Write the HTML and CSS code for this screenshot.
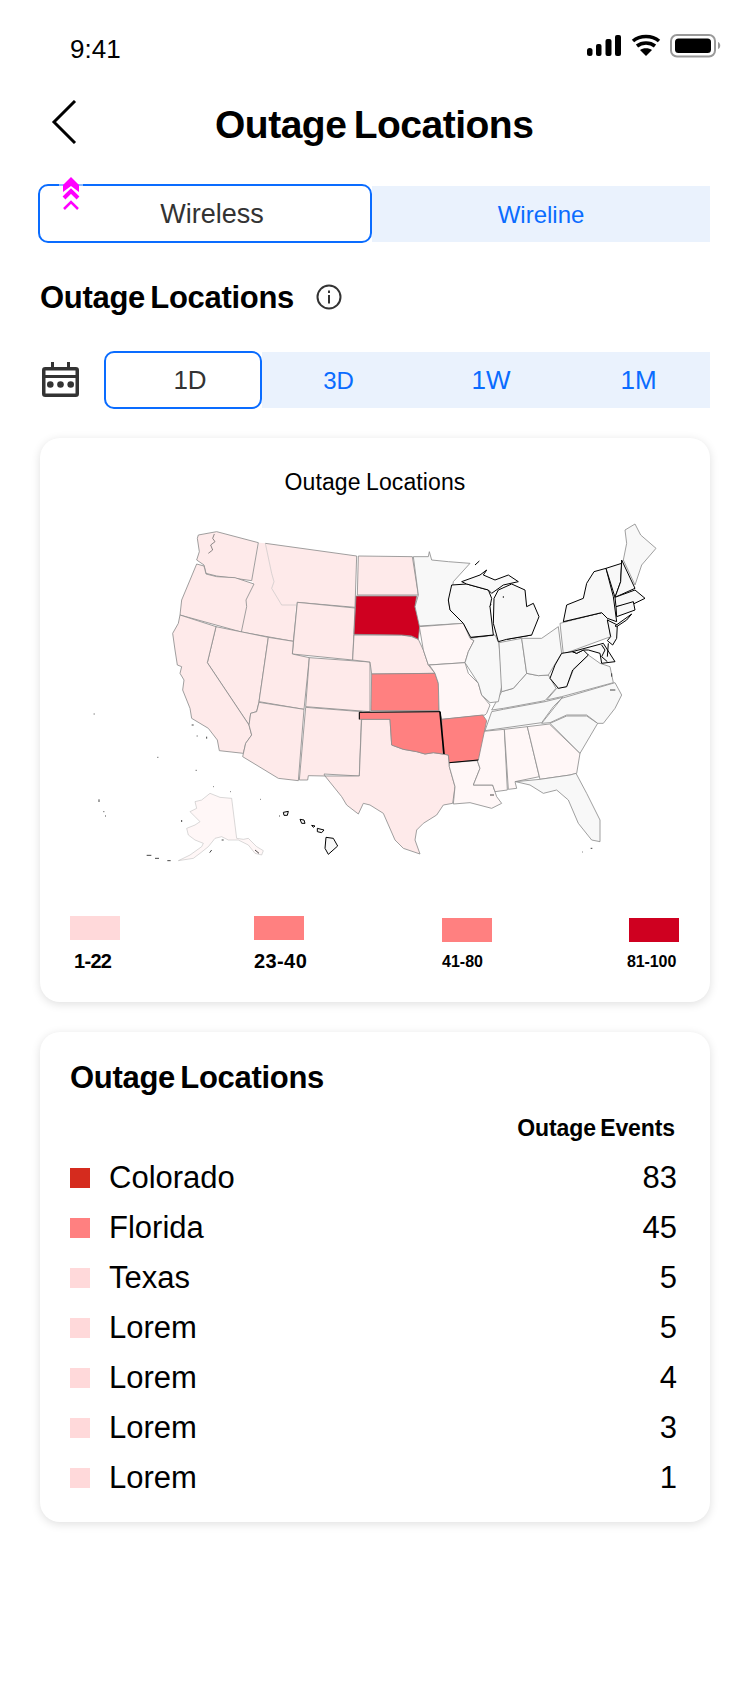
FILE: index.html
```html
<!DOCTYPE html>
<html lang="en">
<head>
    <meta charset="UTF-8">
    <title>Outage Locations</title>
    <link rel="stylesheet" href="styles.css">
</head>
<body>
    <div class="estado">
        <span class="hora">9:41</span>
        <svg class="iconos_estado" width="135" height="24" viewBox="0 0 135 24">
            <rect x="0" y="14" width="5.5" height="8" rx="2.5" fill="#000"/>
            <rect x="9" y="10" width="5.5" height="12" rx="2" fill="#000"/>
            <rect x="18.5" y="5" width="6" height="17" rx="2" fill="#000"/>
            <rect x="28" y="1" width="6" height="21" rx="2" fill="#000"/>
            <path d="M46 7 C53 1 65 1 72 7 M50 12 C55 8 63 8 68 12" fill="none" stroke="#000" stroke-width="3.6"/>
            <path d="M53 16 C56 13.500 62 13.500 65 16 L59 22 Z" fill="#000"/>
            <rect x="84" y="1" width="44" height="21.500" rx="6" fill="#fff" stroke="#999" stroke-width="2"/>
            <rect x="88" y="4.500" width="36" height="14.500" rx="3.500" fill="#000"/>
            <path d="M131 8 C134 9 134 14 131 15 Z" fill="#999"/>
        </svg>
    </div>

    <header class="cabecera">
        <svg class="volver" width="26" height="44" viewBox="0 0 26 44">
            <path d="M24 1 L3 22 L24 43" fill="none" stroke="#000" stroke-width="3"/>
        </svg>
        <h1>Outage Locations</h1>
    </header>

    <div class="pestanas">
        <div class="pestana activa">Wireless</div>
        <div class="pestana">Wireline</div>
        <svg class="flechas" width="24" height="34" viewBox="0 0 24 34">
            <rect x="0" y="7" width="24" height="2" fill="#8ab8fb"/>
            <path d="M12 0 L4 8 V15 L12 9 L20 15 V8 Z" fill="#f0f"/>
            <path d="M5 21 L12 14 L19 21" fill="none" stroke="#f0f" stroke-width="4"/>
            <path d="M5 32 L12 25 L19 32" fill="none" stroke="#f0f" stroke-width="2.500"/>
        </svg>
    </div>

    <div class="seccion">
        <h2>Outage Locations</h2>
        <svg class="info" width="26" height="26" viewBox="0 0 26 26">
            <circle cx="13" cy="13" r="11.500" fill="none" stroke="#333" stroke-width="2"/>
            <rect x="12" y="11" width="2" height="8.500" fill="#333"/>
            <rect x="12" y="6.500" width="2" height="2.500" fill="#333"/>
        </svg>
    </div>

    <div class="periodo">
        <svg class="calendario" width="37" height="35" viewBox="0 0 37 35">
            <rect x="9" y="0" width="3" height="7" fill="#333"/>
            <rect x="25" y="0" width="3" height="7" fill="#333"/>
            <rect x="1.750" y="6.750" width="33.500" height="26.500" rx="1.500" fill="#fff" stroke="#333" stroke-width="3.500"/>
            <rect x="1.500" y="13" width="34" height="3" fill="#333"/>
            <circle cx="8.300" cy="22.500" r="3.300" fill="#333"/>
            <circle cx="18.500" cy="22.500" r="3.300" fill="#333"/>
            <circle cx="28.700" cy="22.500" r="3.300" fill="#333"/>
        </svg>
        <div class="rango activo">1D</div>
        <div class="rango r3d">3D</div>
        <div class="rango r1w">1W</div>
        <div class="rango r1m">1M</div>
    </div>

    <section class="tarjeta mapa_tarjeta">
        <div class="mapa_titulo">Outage Locations</div>
        <!-- coordenadas x3: oeste tal cual, este desplazado 870 -->
        <svg class="mapa" width="590" height="370" viewBox="0 0 1770 1110">
            <g class="gris">
                <path class="rosa sin_borde" d="M537 98 L556 100 L575 190 L582 215 L575 235 L605 285 L648 285 L640 394 L484 366 L500 290 L498 270 L522 222 L515 212 Z"/>
                <path class="rosa sin_borde" d="M556 100 L830 138 L825 292 L652 277 L648 285 L605 285 L575 235 L582 215 L575 190 Z"/>
                <path class="fino" d="M556 100 L575 190 L582 215 L575 235 L605 285 L648 285"/>
                <path class="rosa" d="M355 75 L410 65 L535 98 L515 212 L465 205 L410 198 L378 190 L372 165 L350 150 L358 125 L352 85 Z"/>
                <path class="rosa" d="M350 162 L372 168 L378 192 L410 200 L465 203 L522 222 L498 270 L500 290 L484 366 L300 315 L305 270 L330 210 Z"/>
                <path fill="none" d="M556 100 L830 138 L825 292 L652 277 L640 394 L484 366"/>
                <path class="rosa" d="M652 277 L825 294 L818 450 L637 432 Z"/>
                <path class="rosa" d="M408 350 L565 382 L537 575 L530 605 L512 610 L507 645 L382 458 Z"/>
                <path class="rosa" d="M300 315 L408 350 L382 458 L507 645 L515 675 L497 700 L490 730 L418 722 L412 690 L385 655 L335 625 L330 595 L308 540 L312 510 L300 490 L305 470 L292 465 L285 420 L278 370 L295 340 Z"/>
                <path class="rosa" d="M565 382 L640 394 L637 432 L688 443 L672 598 L537 575 Z"/>
                <path class="rosa" d="M688 443 L870 456 L870 605 L677 590 Z"/>
                <path class="rosa" d="M537 577 L672 598 L655 812 L595 805 L488 740 L497 700 L515 675 L507 645 L512 610 L530 605 Z"/>
                <path class="rosa" d="M677 592 L845 605 L838 798 L732 792 L735 798 L685 797 L683 810 L658 810 Z"/>
                <path class="claro fino" d="M390 850 L420 862 L455 865 L470 985 L490 988 L505 985 L530 1010 L550 1022 L545 1035 L525 1030 L505 1005 L475 990 L445 990 L425 980 L405 985 L385 1010 L360 1030 L340 1045 L295 1052 L330 1035 L365 1010 L370 1000 L345 990 L325 975 L320 955 L345 945 L360 935 L345 920 L330 905 L350 895 L345 875 L365 870 Z"/>
            </g>
            <g class="negro">
                <path class="delgado" d="M403 72 L398 85 L405 95 L392 105 L398 120 L385 130"/>
                <path class="blanco" d="M738 982 L760 985 L773 1008 L745 1033 L735 1015 Z"/>
                <path class="blanco" d="M610 907 L625 904 L622 916 L612 916 Z"/>
                <path class="blanco" d="M660 928 L672 930 L675 940 L665 940 Z"/>
                <path class="blanco" d="M695 946 L705 948 L700 952 Z M712 955 L732 960 L725 968 L712 965 Z"/>
            </g>
            <path class="puntos" d="M41 612 h3 M232 742 h3 M347 781 h3 M400 830 h2 M450 845 h2 M541 868 h2 M597 918 h3 M57 868 v8 M70 905 h3 M75 918 h3 M335 645 h6 M350 678 h3 M380 680 v6 M200 1036 h14 M225 1045 h12 M262 1052 h10 M305 930 v6 M425 990 h6 M395 1020 l-6 8 M525 1020 l12 10"/>

            <g transform="translate(870 0)">
                <g class="gris">
                    <path class="rosa" d="M-35 138 L127 140 L145 255 L-38 255 Z"/>
                    <path class="rosa" d="M-48 375 L95 375 L125 380 L145 388 L160 420 L175 465 L195 490 L5 492 L0 456 L-52 450 Z"/>
                    <path class="rosa" d="M-25 628 L60 628 L65 705 L100 718 L140 725 L165 732 L190 728 L235 735 L238 770 L255 830 L248 880 L220 885 L200 915 L160 940 L140 960 L135 990 L150 1032 L100 1015 L75 990 L40 910 L0 885 L-20 880 L-35 912 L-70 885 L-85 860 L-135 798 L-32 798 Z"/>
                    <path class="medio" d="M5 492 L195 490 L205 520 L207 602 L3 602 Z"/>
                    <path class="fuerte" d="M-42 258 L140 258 L135 290 L150 340 L145 388 L125 378 L95 375 L-48 373 Z"/>
                    <path class="blanco" d="M130 140 L175 140 L178 125 L185 150 L235 155 L300 160 L250 215 L245 250 L235 270 L240 300 L280 340 L148 348 L135 290 L145 255 Z"/>
                    <path class="claro" d="M148 350 L280 340 L300 385 L312 392 L295 425 L285 458 L175 465 L160 420 Z"/>
                    <path class="claro" d="M178 465 L285 458 L295 490 L325 520 L335 555 L360 585 L350 610 L345 615 L215 628 L207 600 L205 520 L195 490 Z"/>
                    <path class="claro" d="M238 758 L322 752 L330 775 L310 825 L368 825 L380 860 L395 880 L365 895 L300 878 L250 882 L255 830 L238 770 Z"/>
                    <path class="claro" d="M330 665 L403 658 L412 840 L375 845 L368 825 L310 825 L330 775 L322 752 Z"/>
                    <path class="claro" d="M403 658 L472 650 L508 800 L435 815 L440 835 L415 838 Z"/>
                    <path class="claro" d="M472 650 L538 642 L630 730 L620 790 L600 795 L510 808 Z"/>
                    <path class="blanco" d="M437 815 L510 808 L600 795 L618 790 L650 850 L690 930 L690 995 L665 990 L625 940 L595 870 L560 840 L520 850 L480 825 Z"/>
                    <path class="blanco" d="M540 640 L590 618 L650 618 L683 640 L630 730 Z"/>
                    <path class="blanco" d="M515 640 L575 565 L735 518 L755 555 L735 595 L700 640 L683 640 L650 615 L590 615 L540 638 Z"/>
                    <path class="blanco" d="M345 662 L365 605 L400 598 L525 575 L578 562 L550 590 L515 638 Z"/>
                    <path class="blanco" d="M365 600 L395 545 L430 535 L470 490 L505 497 L535 495 L558 535 L525 572 L400 595 Z"/>
                    <path class="blanco" d="M300 385 L375 375 L387 400 L397 520 L385 575 L360 578 L335 555 L325 520 L285 458 L295 425 L312 392 Z"/>
                    <path class="blanco" d="M387 398 L455 385 L470 490 L430 535 L395 545 Z"/>
                    <path class="blanco" d="M455 385 L515 385 L565 350 L575 430 L535 495 L505 497 L470 490 Z"/>
                    <path class="blanco" d="M530 570 L560 535 L590 530 L610 480 L655 435 L690 460 L720 470 L730 518 L575 560 Z"/>
                    <path class="blanco" d="M765 60 L795 42 L812 75 L858 115 L815 165 L795 225 L760 150 L770 100 Z"/>
                    <path class="medio" d="M-32 607 L210 605 L217 680 L220 732 L190 728 L165 732 L140 725 L100 718 L65 705 L60 628 L-32 628 Z"/>
                    <path class="medio" d="M215 628 L338 615 L350 632 L325 750 L238 758 L235 735 L220 732 Z"/>
                    <path class="blanco" d="M570 340 L695 308 L712 325 L722 380 L580 432 Z"/>
                </g>
                <g class="negro">
                    <path d="M-32 628 L-32 607 L210 605"/>
                    <path class="grueso" d="M210 605 L217 680 L222 732"/>
                    <path d="M238 758 L325 750"/>
                    <path d="M302 382 L370 375 M410 388 L485 375"/>
                    <path d="M580 335 L695 308"/>
                    <path class="blanco" d="M245 225 L290 222 L355 240 L365 265 L360 290 L370 375 L302 382 L280 340 L240 300 L235 270 Z"/>
                    <path class="blanco" d="M372 265 L385 240 L425 222 L465 240 L470 290 L490 280 L507 320 L485 375 L410 388 L385 395 L370 340 Z"/>
                    <path class="blanco" d="M275 215 L330 195 L350 180 L340 195 L375 210 L415 195 L445 215 L400 225 L365 250 L355 240 L290 222 Z"/>
                    <path class="blanco" d="M580 335 L590 285 L640 265 L650 220 L672 185 L708 175 L730 260 L740 335 L712 325 L695 308 Z"/>
                    <path class="blanco" d="M575 430 L607 425 L620 430 L640 420 L655 435 L608 480 L590 530 L565 535 L540 505 L555 465 Z"/>
                    <path class="blanco" d="M607 425 L700 400 L735 455 L695 460 L690 430 L655 420 L640 420 L620 430 Z"/>
                    <path class="blanco" d="M712 330 L742 345 L740 385 L728 405 L712 392 L722 380 Z"/>
                    <path class="blanco" d="M708 175 L755 160 L752 215 L735 262 Z"/>
                    <path class="blanco" d="M755 150 L795 235 L735 262 L752 215 Z"/>
                    <path class="blanco" d="M735 262 L795 240 L825 265 L790 282 L738 290 Z"/>
                    <path class="blanco" d="M738 290 L790 275 L795 300 L740 320 Z"/>
                    <path class="blanco" d="M735 348 L785 312 L770 330 L740 350 Z"/>
                    <path d="M315 165 L328 153"/>
                    <path d="M695 405 L705 420 L695 440 L712 455 M715 400 L712 440"/>
                </g>
                <path class="puntos" d="M400 258 v6 M358 290 l6 -6 M662 1015 h5 M636 1026 h2 M360 855 h12 M725 490 v10 M720 540 h16"/>
            </g>
        </svg>
        <div class="leyenda">
            <div class="dato">
                <div class="muestra m_suave"></div>
                <div class="dato_texto t1">1-22</div>
            </div>
            <div class="dato">
                <div class="muestra m_medio"></div>
                <div class="dato_texto t2">23-40</div>
            </div>
            <div class="dato bajo">
                <div class="muestra m_medio"></div>
                <div class="dato_texto t3">41-80</div>
            </div>
            <div class="dato bajo">
                <div class="muestra m_fuerte"></div>
                <div class="dato_texto t4">81-100</div>
            </div>
        </div>
    </section>

    <section class="tarjeta lista_tarjeta">
        <h2>Outage Locations</h2>
        <div class="lista_cabecera">Outage Events</div>
        <div class="fila"><span class="cuadro c_rojo"></span><span class="nombre">Colorado</span><span class="numero">83</span></div>
        <div class="fila"><span class="cuadro c_medio"></span><span class="nombre">Florida</span><span class="numero">45</span></div>
        <div class="fila"><span class="cuadro c_suave"></span><span class="nombre">Texas</span><span class="numero">5</span></div>
        <div class="fila"><span class="cuadro c_suave"></span><span class="nombre">Lorem</span><span class="numero">5</span></div>
        <div class="fila"><span class="cuadro c_suave"></span><span class="nombre">Lorem</span><span class="numero">4</span></div>
        <div class="fila"><span class="cuadro c_suave"></span><span class="nombre">Lorem</span><span class="numero">3</span></div>
        <div class="fila"><span class="cuadro c_suave"></span><span class="nombre">Lorem</span><span class="numero">1</span></div>
    </section>
</body>
</html>
```

FILE: styles.css
```css
body{
    margin:0;
    min-height:1696px;
    background:#fff;
    color:#000;
    font-family:"Liberation Sans",Arial,sans-serif;
}
h1,h2{
    margin:0;
    font-weight:700;
}

/* barra de estado */
.estado{
    display:flex;
    justify-content:space-between;
    padding:34px 28px 0 70px;
    height:30px;
}
.hora{
    font-size:26px;
    line-height:30px;
}

/* cabecera */
.cabecera{
    display:flex;
    align-items:center;
    height:52px;
    margin-top:34px;
    padding-left:51px;
}
.volver{
    margin-top:-4px;
}
.cabecera h1{
    margin:2px 0 0 138px;
    font-size:39px;
    letter-spacing:-0.5px;
    word-spacing:-3px;
}

/* pestañas */
.pestanas{
    position:relative;
    display:flex;
    align-items:center;
    margin:34px 40px 0 38px;
}
.pestana{
    flex:1;
    height:56px;
    line-height:57px;
    text-align:center;
    font-size:24px;
    color:#0a6cff;
    background:#eaf2fd;
}
.pestana.activa{
    flex:none;
    box-sizing:border-box;
    width:334px;
    height:59px;
    line-height:57px;
    padding-left:14px;
    font-size:27px;
    color:#333;
    background:#fff;
    border:2px solid #0a6cff;
    border-radius:10px;
}
.flechas{
    position:absolute;
    left:21px;
    top:-7px;
}

/* sección */
.seccion{
    display:flex;
    align-items:center;
    height:40px;
    margin:34px 0 0 40px;
}
.seccion h2,.lista_tarjeta h2{
    font-size:31px;
    line-height:40px;
    letter-spacing:-0.3px;
    word-spacing:-3px;
}
.seccion h2{
    margin-top:2px;
}
.info{
    margin-left:22px;
}

/* periodo */
.periodo{
    display:flex;
    align-items:center;
    height:58px;
    margin:34px 40px 0 42px;
}
.calendario{
    margin:-2px 25px 0 0;
}
.rango{
    height:56px;
    line-height:56px;
    text-align:center;
    font-size:26px;
    color:#0a6cff;
    background:#eaf2fd;
}
.rango.activo{
    box-sizing:border-box;
    width:158px;
    height:58px;
    line-height:54px;
    padding-left:14px;
    color:#333;
    background:#fff;
    border:2px solid #0a6cff;
    border-radius:10px;
}
.r3d{
    width:153px;
    line-height:58px;
    font-size:24px;
}
.r1w{
    width:152px;
}
.r1m{
    width:143px;
}

/* tarjetas */
.tarjeta{
    box-sizing:border-box;
    margin:0 40px;
    padding:0 30px;
    background:#fff;
    border-radius:20px;
    box-shadow:0 2px 10px rgba(0,0,0,0.13);
}
.mapa_tarjeta{
    height:564px;
    margin-top:29px;
    padding-top:30px;
}
.mapa_titulo{
    height:28px;
    line-height:28px;
    text-align:center;
    font-size:23px;
    letter-spacing:0.1px;
    word-spacing:-1px;
}
.mapa{
    display:block;
    margin:14px 0 0 10px;
}
.mapa path{
    stroke-linejoin:round;
}
.gris{
    stroke:#8d8d8d;
    stroke-width:2.5;
    fill:none;
}
.negro{
    stroke:#000;
    stroke-width:3;
    fill:none;
}
.rosa{fill:#feeaea;}
.claro{fill:#fff7f7;}
.blanco{fill:#f8f8f8;}
.medio{fill:#ff8080;}
.fuerte{fill:#cf0020;}
.sin_borde{stroke:none;}
.gris .fino{stroke:#b5b5b5;stroke-width:1.5;}
.negro .delgado{stroke:#555;stroke-width:2;}
.negro .grueso{stroke-width:5;}
.puntos{
    stroke:#222;
    stroke-width:2.5;
    fill:none;
}

/* leyenda */
.leyenda{
    display:grid;
    grid-template-columns:184px 188px 187px 50px;
    margin-top:36px;
}
.dato{
    width:50px;
}
.bajo{
    margin-top:2px;
}
.muestra{
    width:50px;
    height:24px;
}
.m_suave{background:#ffd9da;}
.m_medio{background:#ff8080;}
.m_fuerte{background:#cf0020;}
.dato_texto{
    margin-top:10px;
    line-height:22px;
    font-weight:700;
    white-space:nowrap;
}
.t1{
    padding-left:4px;
    font-size:20px;
    letter-spacing:-0.7px;
}
.t2{
    font-size:20px;
    letter-spacing:0.4px;
}
.t3{
    margin-top:9px;
    font-size:16px;
}
.t4{
    margin-top:9px;
    margin-left:-2px;
    font-size:16px;
    letter-spacing:-0.1px;
}

/* lista */
.lista_tarjeta{
    height:490px;
    margin-top:30px;
    padding-top:26px;
}
.lista_cabecera{
    margin-top:16px;
    padding-right:5px;
    text-align:right;
    line-height:28px;
    font-size:23px;
    font-weight:700;
    letter-spacing:-0.1px;
    word-spacing:-2px;
}
.fila{
    display:flex;
    align-items:center;
    height:50px;
}
.lista_cabecera + .fila{
    margin-top:11px;
}
.cuadro{
    width:20px;
    height:20px;
}
.c_rojo{background:#d52b1e;}
.c_medio{background:#ff8080;}
.c_suave{background:#ffd9da;}
.nombre{
    margin-left:19px;
    font-size:31px;
}
.numero{
    margin-left:auto;
    padding-right:3px;
    font-size:31px;
}
```
